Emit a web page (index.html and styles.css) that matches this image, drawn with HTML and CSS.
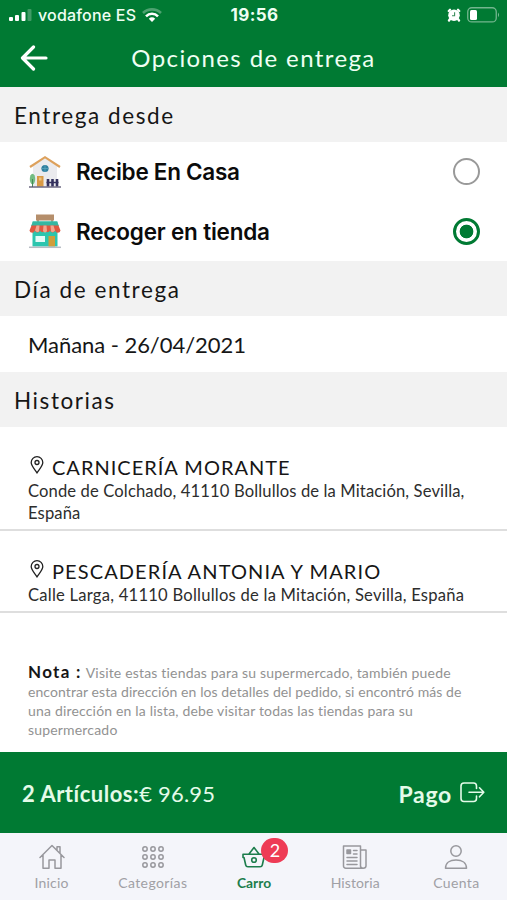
FILE: index.html
```html
<!DOCTYPE html>
<html lang="es">
<head>
<meta charset="utf-8">
<title>Opciones de entrega</title>
<link rel="stylesheet" href="styles.css">
</head>
<body>
<div class="app">
  <div class="status">
    <div class="carrier">
      <svg width="23" height="14" viewBox="0 0 23 14" fill="#fff"><rect x="0" y="9" width="4" height="4" rx="1"/><rect x="6" y="7" width="4" height="6" rx="1"/><rect x="12.500" y="4" width="4" height="9" rx="1"/><rect x="18.500" y="1" width="4" height="12" rx="1" opacity=".25"/></svg>
      <span class="carrier-name">vodafone ES</span>
      <svg class="wifi" width="20" height="14" viewBox="0 0 20 14" fill="none" stroke="#fff" stroke-width="2.600"><path d="M1 5a13 13 0 0 1 18 0" opacity=".3"/><path d="M4 8.300a8.500 8.500 0 0 1 12 0"/><path d="M6.800 10.700a5 5 0 0 1 6.400 0L10 14z" fill="#fff" stroke="none"/></svg>
    </div>
    <span class="clock">19:56</span>
    <div class="power">
      <svg width="14" height="14" viewBox="0 0 14 14"><path d="M1.800 3 3 1.800M12.200 3 11 1.800M3 11l-1 1.500M11 11l1 1.500" stroke="#fff" stroke-width="2.300" stroke-linecap="round"/><circle cx="7" cy="7.200" r="5.800" fill="#fff"/><path d="M7.600 4.300v3.400H5" fill="none" stroke="#3c8f5c" stroke-width="1.100"/></svg>
      <svg width="33" height="16" viewBox="0 0 33 16"><rect x=".75" y=".75" width="28.500" height="14.200" rx="4" fill="none" stroke="#fff" stroke-opacity=".45" stroke-width="1.300"/><rect x="3" y="3" width="7" height="10" rx="1.500" fill="#fff"/><path d="M31 5.500q2 2.300 0 4.800z" fill="#fff" opacity=".5"/></svg>
    </div>
  </div>
  <header class="header">
    <svg class="back" width="28" height="26" viewBox="0 0 28 26" fill="none" stroke="#fff" stroke-width="3.200" stroke-linecap="round" stroke-linejoin="round"><path d="M13.500 2 2.500 13l11 11M3 13h23"/></svg>
    <h1 class="title">Opciones de entrega</h1>
  </header>

  <h2 class="section">Entrega desde</h2>
  <div class="options">
    <label class="option">
      <svg width="34" height="34" viewBox="0 0 34 34"><path d="M5 11 17 3l12 8v20H5z" fill="#ebebee"/><path d="M2 12 17 2.200 32 12" fill="none" stroke="#dda15c" stroke-width="2.200"/><circle cx="17" cy="13.500" r="3.600" fill="#2e7f9f"/><path d="M17 10v7M13.500 13.500h7" stroke="#5aa5bd" stroke-width=".8"/><rect x="9" y="21" width="6.500" height="10.500" fill="#d99a45"/><rect x="11" y="22.500" width="2.500" height="3" fill="#edc380"/><ellipse cx="4.500" cy="24" rx="2.700" ry="5.300" fill="#74bd83"/><path d="M4.500 24v8" stroke="#468a58"/><path d="M20 24v7.500M24.500 24v7.500M29 24v7.500" stroke="#35325f" stroke-width="2.600"/><path d="M18.500 27.500h12" stroke="#35325f" stroke-width="1.500"/><path d="M1 32h32" stroke="#55516f" stroke-width="1.300"/></svg>
      <span class="option-name casa">Recibe En Casa</span>
      <span class="radio"></span>
    </label>
    <label class="option">
      <svg width="34" height="36" viewBox="0 0 34 36"><path d="M10 6v4M24 6v4" stroke="#9b7d5f" stroke-width="1.500"/><rect x="4.500" y="8.500" width="25" height="25" fill="#2cc5ae"/><rect x="8" y="1.500" width="18" height="6" fill="#b58e6b"/><path d="M5 8.500h24l2 4.500H3z" fill="#36b7a1"/><path d="M3.500 12.500h27l2 5a2.700 2.700 0 0 1-5.300 0 2.700 2.700 0 0 1-5.200 0 2.700 2.700 0 0 1-5 0 2.700 2.700 0 0 1-5 0 2.700 2.700 0 0 1-5.200 0 2.700 2.700 0 0 1-5.300 0z" fill="#e1573f"/><path d="M8.500 12.500h3l-.5 6q-2 1.500-4-1zM15.500 12.500h3l.5 5.500q-2 3-4 0zM22.500 12.500h3l1.500 5q-2 3-4 1z" fill="#f4a58e"/><rect x="7.500" y="23" width="9.500" height="6" fill="#e5fbf7"/><rect x="20.500" y="23" width="6.500" height="10.500" fill="#cf9e3b"/><path d="M1 34.300h32" stroke="#b8bdc4" stroke-width="1.500"/></svg>
      <span class="option-name tienda">Recoger en tienda</span>
      <span class="radio on"></span>
    </label>
  </div>

  <h2 class="section">Día de entrega</h2>
  <div class="day">Mañana - 26/04/2021</div>

  <h2 class="section">Historias</h2>
  <div class="store first">
    <div class="store-head">
      <svg width="14" height="18" viewBox="0 0 14 18" fill="none" stroke="#222" stroke-width="1.300"><path d="M7 16.800C4.800 13.300 1.200 9.800 1.200 6.500a5.800 5.800 0 0 1 11.600 0C12.800 9.800 9.200 13.300 7 16.800z"/><circle cx="7" cy="6.500" r="2"/></svg>
      <h3 class="store-name carniceria">CARNICERÍA MORANTE</h3>
    </div>
    <p class="address conde">Conde de Colchado, 41110 Bollullos de la Mitación, Sevilla,<br>España</p>
  </div>
  <div class="store">
    <div class="store-head">
      <svg width="14" height="18" viewBox="0 0 14 18" fill="none" stroke="#222" stroke-width="1.300"><path d="M7 16.800C4.800 13.300 1.200 9.800 1.200 6.500a5.800 5.800 0 0 1 11.600 0C12.800 9.800 9.200 13.300 7 16.800z"/><circle cx="7" cy="6.500" r="2"/></svg>
      <h3 class="store-name pescaderia">PESCADERÍA ANTONIA Y MARIO</h3>
    </div>
    <p class="address larga">Calle Larga, 41110 Bollullos de la Mitación, Sevilla, España</p>
  </div>

  <p class="note"><b class="note-label">Nota :</b>Visite estas tiendas para su supermercado, también puede<br><span class="tight">encontrar esta dirección en los detalles del pedido, si encontró más de</span><br>una dirección en la lista, debe visitar todas las tiendas para su<br>supermercado</p>

  <div class="checkout">
    <div class="total"><b>2 Artículos:</b><span>€ 96.95</span></div>
    <div class="pay">
      <b>Pago</b>
      <svg width="25" height="22" viewBox="0 0 25 22" fill="none" stroke="#e4fbe9" stroke-width="1.600" stroke-linecap="round" stroke-linejoin="round"><path d="M16.500 6.500V4a3 3 0 0 0-3-3H4a3 3 0 0 0-3 3v12.500a3 3 0 0 0 3 3h9.500a3 3 0 0 0 3-3V14M9 10.300h14.500M19.500 5.800l4.300 4.500-4.300 4.500"/></svg>
    </div>
  </div>

  <nav class="tabs">
    <a class="tab">
      <svg width="26" height="26" viewBox="0 0 26 26" fill="none" stroke="#98989d" stroke-width="1.500" stroke-linejoin="round" stroke-linecap="round"><path d="M1 13.500 13 1.500l12 12M4 11v13.300h6V16h6v8.300h6V11M18 6V2.700h3V9"/></svg>
      <span class="inicio">Inicio</span>
    </a>
    <a class="tab">
      <svg width="26" height="26" viewBox="0 0 26 26" fill="none" stroke="#98989d" stroke-width="1.500"><circle cx="5" cy="5" r="2.200"/><circle cx="13" cy="5" r="2.200"/><circle cx="21" cy="5" r="2.200"/><circle cx="5" cy="13" r="2.200"/><circle cx="13" cy="13" r="2.200"/><circle cx="21" cy="13" r="2.200"/><circle cx="5" cy="21" r="2.200"/><circle cx="13" cy="21" r="2.200"/><circle cx="21" cy="21" r="2.200"/></svg>
      <span class="categorias">Categorías</span>
    </a>
    <a class="tab active">
      <svg width="26" height="26" viewBox="0 0 26 26" fill="none" stroke="#1c7d4c" stroke-width="1.600" stroke-linejoin="round" stroke-linecap="round"><path d="M2 10.200h22v3.300h-1l-1.700 7.500q-.4 1.800-2.200 1.800H6.900q-1.800 0-2.200-1.800L3 13.500H2zM8 10 13 3.500l5 6.500"/><circle cx="13" cy="16" r="2.300"/></svg>
      <span class="carro">Carro</span>
      <span class="badge">2</span>
    </a>
    <a class="tab">
      <svg width="26" height="26" viewBox="0 0 26 26" fill="none" stroke="#98989d" stroke-width="1.500" stroke-linejoin="round" stroke-linecap="round"><path d="M21.500 24.200H3.700A2.200 2.200 0 0 1 1.500 22V2h17v20q0 2.200 2.700 2.200T24 22V6h-5.500"/><path d="M11.500 6.500H15M11.500 10H15M5 13.500h10M5 17h10M5 20.500h10"/><rect x="5" y="6" width="3.500" height="3.500" fill="#98989d"/></svg>
      <span>Historia</span>
    </a>
    <a class="tab">
      <svg width="26" height="26" viewBox="0 0 26 26" fill="none" stroke="#98989d" stroke-width="1.500" stroke-linejoin="round"><circle cx="13" cy="7" r="5.200"/><path d="M2.500 24.200c0-5.500 4.500-8.200 10.500-8.200s10.500 2.700 10.500 8.200z"/></svg>
      <span class="cuenta">Cuenta</span>
    </a>
  </nav>
</div>
</body>
</html>
```
FILE: styles.css
```css
* { box-sizing: border-box; }
body { margin: 0; background: #fff; color: #161616; font-family: Lato, "Open Sans", sans-serif; }
h1, h2, h3, p { margin: 0; font-weight: 400; }
svg { display: block; flex: none; }
.app { width: 507px; height: 900px; display: flex; flex-direction: column; overflow: hidden; white-space: nowrap; }
.app > * { flex: none; }

.status { height: 30px; padding: 0 7px 0 9px; display: grid; grid-template-columns: 1fr auto 1fr; align-items: center; background: #007a33; color: #effff3; font-family: Inter, sans-serif; }
.carrier { display: flex; align-items: center; }
.carrier-name { margin-left: 6px; font-size: 16px; font-weight: 500; letter-spacing: .19px; }
.wifi { margin-left: 6px; }
.clock { font-size: 17px; font-weight: 700; letter-spacing: .4px; }
.power { display: flex; align-items: center; justify-content: flex-end; gap: 6px; }

.header { height: 57px; padding: 0 20px 2px; display: grid; grid-template-columns: 28px 1fr 28px; align-items: center; background: #007a33; color: #effff3; }
.title { font-size: 24px; line-height: 30px; letter-spacing: 1.39px; text-align: center; }

.section { height: 55px; padding: 2px 14px 0; background: #f2f2f2; font-size: 22.5px; line-height: 54px; letter-spacing: 1.58px; }

.options { height: 119px; display: flex; flex-direction: column; }
.option { height: 59.500px; padding: 0 27px 0 28px; display: flex; align-items: center; color: #0b0b0b; font-family: Inter, sans-serif; }
.option-name { flex: 1; margin-left: 14px; font-size: 22.5px; font-weight: 600; }
.casa { letter-spacing: -.27px; }
.tienda { letter-spacing: -.19px; }
.radio { width: 27px; height: 27px; border: 2.500px solid #999; border-radius: 50%; }
.radio.on { border: 3px solid #007a33; background: radial-gradient(circle, #007a33 6.500px, #fff 7.200px); }

.day { height: 56px; padding: 2px 28px 0; font-size: 22px; line-height: 54px; letter-spacing: -.05px; }

.store { height: 82px; padding: 27px 28px 0; border-bottom: 2px solid #dedede; }
.store.first { height: 104px; }
.store-head { height: 26px; padding-left: 2px; display: flex; align-items: center; gap: 8px; }
.store-head svg { margin-bottom: 5px; }
.store-name { font-size: 20px; line-height: 26px; }
.carniceria { letter-spacing: 1px; }
.pescaderia { letter-spacing: 1.1px; }
.address { font-size: 16.6px; line-height: 22px; color: #2d2d2d; }
.conde { letter-spacing: .12px; }
.larga { letter-spacing: .23px; }

.note { height: 139px; padding: 50px 28px 0; font-size: 14px; line-height: 19px; letter-spacing: .18px; color: #929292; }
.note .tight { letter-spacing: .08px; }
.note-label { margin-right: 4px; font-size: 17px; line-height: 16px; letter-spacing: 1.3px; color: #161616; }

.checkout { height: 81px; padding: 2px 22px 0; display: flex; align-items: center; justify-content: space-between; background: #007a33; color: #e4fbe9; font-size: 22px; line-height: 28px; }
.total b { letter-spacing: .51px; }
.total span { letter-spacing: .2px; }
.pay { display: flex; align-items: center; gap: 8px; }
.pay b { font-size: 23px; letter-spacing: .7px; }
.pay svg { margin-bottom: 2px; }

.tabs { height: 67px; padding: 11px 0 0 1px; display: grid; grid-template-columns: repeat(5, 1fr); background: #f4f5fa; }
.tab { position: relative; display: flex; flex-direction: column; align-items: center; gap: 4px; font-size: 14px; line-height: 18px; letter-spacing: .09px; color: #a0a0a5; }
.inicio { letter-spacing: .2px; }
.categorias { letter-spacing: .4px; }
.cuenta { letter-spacing: .37px; }
.carro { font-size: 13.8px; font-weight: 700; letter-spacing: 0; color: #1c7d4c; }
.badge { position: absolute; left: 58px; top: -6px; width: 27px; height: 25px; border-radius: 13px; background: #ee3b55; color: #fff; font-size: 18px; line-height: 25px; text-align: center; }
```
